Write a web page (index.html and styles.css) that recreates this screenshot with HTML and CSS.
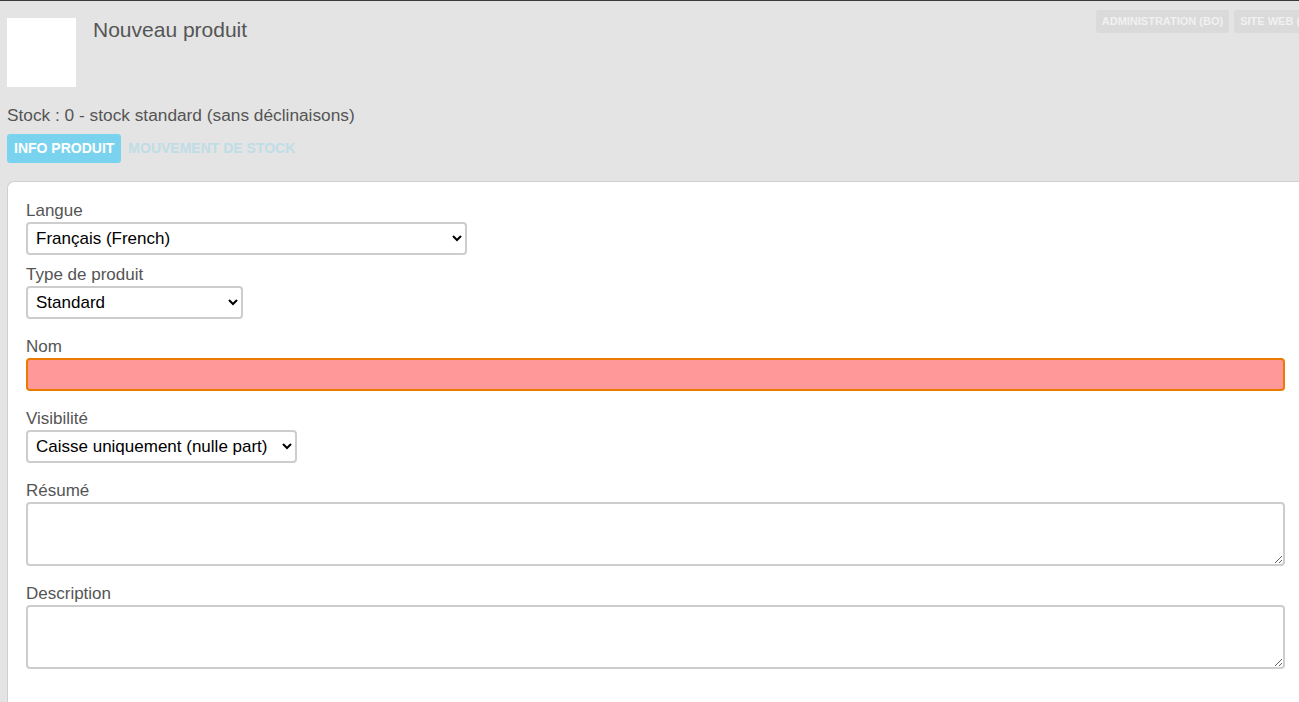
FILE: index.html
```html
<!DOCTYPE html>
<html lang="fr">

<head>
    <meta charset="UTF-8">
    <meta name="viewport" content="width=device-width, initial-scale=1.0">
    <title>Nouveau produit</title>
    <link rel="stylesheet" href="styles.css">
</head>

<body>
    <div class="page">
        <div class="header">
            <div class="logo"></div>
            <h1 class="title">Nouveau produit</h1>
            <div class="top-links">
                <a href="#" class="top-link">ADMINISTRATION (BO)</a>
                <a href="#" class="top-link">SITE WEB (FO)</a>
            </div>
        </div>

        <p class="stock">Stock : 0 - stock standard (sans déclinaisons)</p>

        <div class="tabs">
            <a href="#" class="tab active">INFO PRODUIT</a>
            <a href="#" class="tab">MOUVEMENT DE STOCK</a>
        </div>

        <div class="card">
            <div class="field first">
                <label for="langue">Langue</label>
                <select id="langue" class="w-lang">
                    <option>Français (French)</option>
                </select>
            </div>
            <div class="field tight">
                <label for="type">Type de produit</label>
                <select id="type" class="w-type">
                    <option>Standard</option>
                </select>
            </div>
            <div class="field">
                <label for="nom">Nom</label>
                <input type="text" id="nom" class="input-error" autofocus>
            </div>
            <div class="field">
                <label for="visibilite">Visibilité</label>
                <select id="visibilite" class="w-vis">
                    <option>Caisse uniquement (nulle part)</option>
                </select>
            </div>
            <div class="field">
                <label for="resume">Résumé</label>
                <textarea id="resume"></textarea>
            </div>
            <div class="field">
                <label for="description">Description</label>
                <textarea id="description"></textarea>
            </div>
        </div>
    </div>
</body>

</html>
```

FILE: styles.css
```css
html,
body {
    margin: 0;
    padding: 0;
    overflow: hidden;
}

body {
    background-color: #e4e4e4;
    border-top: 1px solid #3a3a3a;
    font-family: "Liberation Sans", Arial, sans-serif;
    color: #555;
}

.page {
    box-sizing: border-box;
    width: 1329px;
    padding-left: 7px;
}

/* header */
.header {
    display: flex;
    align-items: flex-start;
    padding-top: 9px;
}

.logo {
    width: 69px;
    height: 69px;
    margin-top: 8px;
    background-color: #fff;
}

.title {
    margin: 8px 0 0 17px;
    font-size: 21px;
    font-weight: normal;
    line-height: 24px;
    color: #555;
}

.top-links {
    display: flex;
    gap: 5px;
    margin-left: auto;
    margin-right: 4px;
}

.top-link {
    display: block;
    padding: 5px 6px 6px;
    border-radius: 3px;
    background-color: #dadada;
    color: #f1f1f1;
    font-size: 11px;
    line-height: 12px;
    font-weight: bold;
    text-decoration: none;
}

.stock {
    margin: 19px 0 0;
    font-size: 17.3px;
    line-height: 18px;
}

/* tabs */
.tabs {
    display: flex;
    margin-top: 10px;
}

.tab {
    display: block;
    padding: 7px 7px;
    height: 15px;
    line-height: 15px;
    border-radius: 3px;
    font-size: 14px;
    font-weight: bold;
    text-decoration: none;
    color: #bfdde6;
}

.tab.active {
    background-color: #7ad3ee;
    color: #fff;
}

/* card */
.card {
    margin: 18px 25px 0 0;
    padding: 19px 19px 50px 18px;
    background-color: #fff;
    border: 1px solid #cfcfcf;
    border-right: none;
    border-radius: 7px 0 0 0;
}

.field {
    margin-top: 18px;
}

.field.first {
    margin-top: 0;
}

.field.tight {
    margin-top: 10px;
}

.field label {
    display: block;
    margin-bottom: 2px;
    font-size: 17px;
    line-height: 19px;
    color: #555;
}

.field select,
.field input,
.field textarea {
    display: block;
    box-sizing: border-box;
    border: 2px solid #cdcdcd;
    border-radius: 4px;
    font-family: "Liberation Sans", Arial, sans-serif;
    font-size: 17px;
    color: #000;
    background-color: #fff;
}

.field select {
    height: 33px;
    padding: 0 4px 0 4px;
}

.w-lang {
    width: 441px;
}

.w-type {
    width: 217px;
}

.w-vis {
    width: 271px;
}

.field input {
    width: 100%;
    height: 33px;
    padding: 0 6px;
}

.input-error {
    background-color: #ff9999 !important;
    border-color: #e87b00 !important;
    outline: none;
}

.field textarea {
    width: 100%;
    height: 64px;
    padding: 4px 8px;
    resize: vertical;
}
```
